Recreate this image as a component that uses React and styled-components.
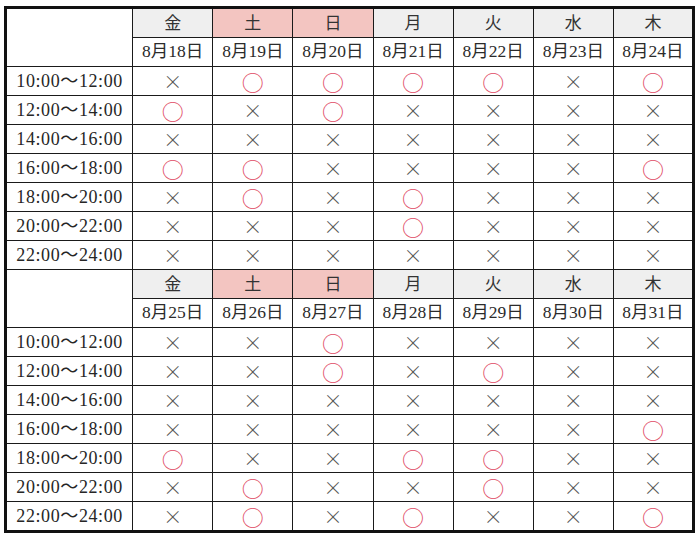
import React from "react";
import styled, { createGlobalStyle } from "styled-components";

const Global = createGlobalStyle`
  html, body { margin: 0; padding: 0; background: #fff; }
  body { width: 700px; height: 540px; overflow: hidden; }
`;

const Page = styled.div`
  padding: 6px 0 0 4px;
`;

const Table = styled.table`
  border-collapse: collapse;
  table-layout: fixed;
  width: 691px;
  border: 3px solid #111;
  font-family: "Liberation Serif", "Noto Sans CJK JP", serif;
  color: #2b2b2b;
`;

const Cell = styled.td`
  border: 1px solid #1a1a1a;
  height: 28px;
  padding: 0;
  text-align: center;
  vertical-align: middle;
  line-height: 1;
`;

const DayCell = styled(Cell)`
  background: ${(p) => (p.$weekend ? "#f3c5c1" : "#efefef")};
  font-size: 17px;
  color: #333;
`;

const DateCell = styled(Cell)`
  font-size: 17.5px;
  color: #2b2b2b;
`;

const TimeCell = styled(Cell)`
  font-size: 18px;
  letter-spacing: 0.6px;
  color: #262626;
`;

const Corner = styled(Cell)``;

const Circle = styled.span`
  display: inline-block;
  font-family: "Noto Sans CJK JP", sans-serif;
  font-size: 22px;
  font-weight: 400;
  color: #e04a64;
  line-height: 1;
  transform: translateY(1px);
`;

const Cross = styled.span`
  display: inline-block;
  font-family: "Noto Sans CJK JP", sans-serif;
  font-size: 19px;
  font-weight: 200;
  color: #555;
  line-height: 1;
`;

const days = ["金", "土", "日", "月", "火", "水", "木"];
const times = [
  "10:00～12:00",
  "12:00～14:00",
  "14:00～16:00",
  "16:00～18:00",
  "18:00～20:00",
  "20:00～22:00",
  "22:00～24:00",
];

const blocks = [
  {
    dates: [18, 19, 20, 21, 22, 23, 24],
    grid: [
      "xooooxo",
      "oxoxxxx",
      "xxxxxxx",
      "ooxxxxo",
      "xoxoxxx",
      "xxxoxxx",
      "xxxxxxx",
    ],
  },
  {
    dates: [25, 26, 27, 28, 29, 30, 31],
    grid: [
      "xxoxxxx",
      "xxoxoxx",
      "xxxxxxx",
      "xxxxxxo",
      "oxxooxx",
      "xoxxoxx",
      "xoxoxxo",
    ],
  },
];

function Mark({ v }) {
  return v === "o" ? <Circle>○</Circle> : <Cross>×</Cross>;
}

export default function App() {
  return (
    <Page>
      <Global />
      <Table>
        <colgroup>
          <col style={{ width: "127px" }} />
          {days.map((d) => (
            <col key={d} style={{ width: "80px" }} />
          ))}
        </colgroup>
        <tbody>
          {blocks.map((b, bi) => (
            <React.Fragment key={bi}>
              <tr>
                <Corner rowSpan={2} />
                {days.map((d, i) => (
                  <DayCell key={d} $weekend={i === 1 || i === 2}>
                    {d}
                  </DayCell>
                ))}
              </tr>
              <tr>
                {b.dates.map((n) => (
                  <DateCell key={n}>8月{n}日</DateCell>
                ))}
              </tr>
              {times.map((t, ri) => (
                <tr key={t}>
                  <TimeCell>{t}</TimeCell>
                  {b.grid[ri].split("").map((v, ci) => (
                    <Cell key={ci}>
                      <Mark v={v} />
                    </Cell>
                  ))}
                </tr>
              ))}
            </React.Fragment>
          ))}
        </tbody>
      </Table>
    </Page>
  );
}
